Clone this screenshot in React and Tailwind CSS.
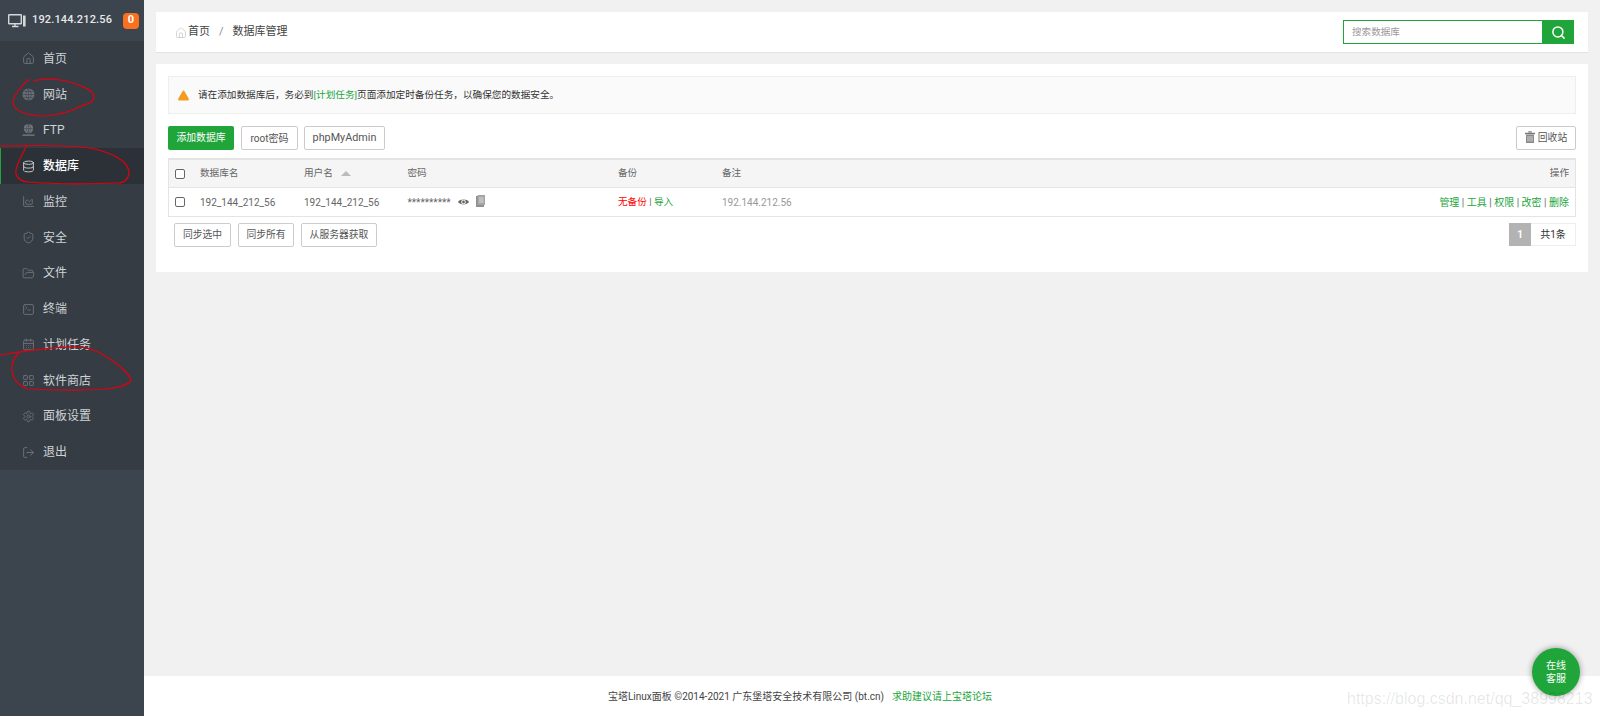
import React from "react";
import {
  House,
  Database,
  ChartArea,
  ShieldCheck,
  FolderOpen,
  SquareTerminal,
  CalendarDays,
  LayoutGrid,
  Settings,
  LogOut,
  Search,
  TriangleAlert,
} from "lucide-react";

const GlobeFill = (props) => (
  <svg width="13" height="13" viewBox="0 0 13 13" fill="none" {...props}>
    <circle cx="6.5" cy="6.5" r="6" fill="#6b7177" />
    <path d="M0.5 6.5h12M1.5 3.5h10M1.5 9.5h10M6.5 0.5v12M6.5 0.5C3 4 3 9 6.5 12.5M6.5 0.5C10 4 10 9 6.5 12.5" stroke="#3b4249" strokeWidth="0.6" />
  </svg>
);

const FtpIcon = (props) => (
  <svg width="14" height="14" viewBox="0 0 14 14" fill="none" {...props}>
    <circle cx="7" cy="5.5" r="5" fill="#73797f" />
    <path d="M2 5.5h10M7 0.5v10M7 0.5C4 3 4 8 7 10.5M7 0.5C10 3 10 8 7 10.5" stroke="#3b4249" strokeWidth="0.6" />
    <path d="M0.5 12.5h13" stroke="#73797f" strokeWidth="1.5" />
  </svg>
);

const menu = [
  { name: "首页", icon: House },
  { name: "网站", icon: GlobeFill, custom: true },
  { name: "FTP", icon: FtpIcon, custom: true },
  { name: "数据库", icon: Database, active: true },
  { name: "监控", icon: ChartArea },
  { name: "安全", icon: ShieldCheck },
  { name: "文件", icon: FolderOpen },
  { name: "终端", icon: SquareTerminal },
  { name: "计划任务", icon: CalendarDays },
  { name: "软件商店", icon: LayoutGrid },
  { name: "面板设置", icon: Settings },
  { name: "退出", icon: LogOut },
];

const Btn = ({ children, className = "" }) => (
  <button className={"h-6 flex items-center justify-center bg-white border border-[#cccccc] rounded-[2px] text-[#555555] " + className}>
    {children}
  </button>
);

const Check = () => (
  <span className="block w-[10px] h-[10px] border border-[#666666] rounded-[2px] bg-white shrink-0" />
);

const Sidebar = () => (
  <aside className="w-[144px] shrink-0 h-[716px] bg-[#3c444d]">
    <div className="h-[41px] flex items-center pl-2 pr-[5px] text-white">
      <svg width="18" height="14" viewBox="0 0 18 14" fill="none" className="shrink-0">
        <rect x="0.7" y="0.7" width="12.6" height="9" rx="0.5" stroke="#d5d8da" strokeWidth="1.4" />
        <path d="M4 12.5h6.5M7 10v2.5" stroke="#d5d8da" strokeWidth="1.4" />
        <rect x="15" y="1.5" width="2.6" height="11" fill="#d5d8da" />
      </svg>
      <span className="ml-[6px] text-[11px] font-medium text-[#e6e8ea] tracking-[0.15px]">192.144.212.56</span>
      <span className="ml-auto w-4 h-4 rounded-[4px] bg-[#f9711f] text-white text-[11px] font-bold flex items-center justify-center">0</span>
    </div>
    <nav className="h-[429px] bg-[#353c44]">
      {menu.map((item) => {
        const Icon = item.icon;
        return (
          <div
            key={item.name}
            className={
              "h-[35.75px] flex items-center text-[12px] " +
              (item.active
                ? "bg-[#2c3138] text-white font-medium border-l border-[#20a53a] pl-[21px]"
                : "text-[#cfd3d6] pl-[22px]")
            }
          >
            <span className="w-[13px] flex justify-center">
              {item.custom ? (
                <Icon />
              ) : (
                <Icon size={13} strokeWidth={1.8} className={item.active ? "text-[#c4c8cb]" : "text-[#6b7177]"} />
              )}
            </span>
            <span className="ml-[8px]">{item.name}</span>
          </div>
        );
      })}
    </nav>
  </aside>
);

const TopBar = () => (
  <div className="h-10 bg-white shadow-[0_1px_1px_rgba(0,0,0,0.05)] flex items-center justify-between pl-[19px] pr-[14px]">
    <div className="flex items-center pt-[1px] text-[11px] text-[#444444]">
      <House size={12} strokeWidth={1.2} className="text-[#bbbbbb] mr-[1px]" />
      <span>首页</span>
      <span className="mx-[9px] text-[#888888]">/</span>
      <span>数据库管理</span>
    </div>
    <div className="flex h-6 w-[231px]">
      <div className="flex-1 border border-[#20a53a] border-r-0 bg-white pl-2 flex items-center text-[9.6px] text-[#999999]">
        搜索数据库
      </div>
      <div className="w-8 bg-[#20a53a] flex items-center justify-center">
        <Search size={15} strokeWidth={2.4} className="text-white" />
      </div>
    </div>
  </div>
);

const Alert = () => (
  <div className="h-[38px] bg-[#fafafa] border border-[#eeeeee] flex items-center pl-2 text-[9.65px] text-[#333333]">
    <TriangleAlert size={13} strokeWidth={0} fill="#f39c1f" className="shrink-0" />
    <span className="ml-[8px]">
      请在添加数据库后，务必到<span className="text-[#20a53a]">[计划任务]</span>页面添加定时备份任务，以确保您的数据安全。
    </span>
  </div>
);

const Toolbar = () => (
  <div className="mt-[12px] flex items-center">
    <button className="h-6 w-[66px] bg-[#20a53a] rounded-[2px] text-[9.8px] text-white flex items-center justify-center">添加数据库</button>
    <Btn className="ml-[7px] w-[57px] text-[10px]">root密码</Btn>
    <Btn className="ml-[6px] w-[81px] text-[10.8px]">phpMyAdmin</Btn>
    <Btn className="ml-auto w-[60px] text-[9.8px]">
      <svg width="10" height="12" viewBox="0 0 10 12" className="mr-[3px] -mt-[3px]">
        <path d="M3.5 1.5V0.5h3v1M0 2h10v1H0z" fill="#777777" stroke="#777777" strokeWidth="0.4" />
        <path d="M1 3.5h8V12H1z" fill="#8a8a8a" />
        <path d="M3 5v5.5M5 5v5.5M7 5v5.5" stroke="#f0f0f0" strokeWidth="0.7" />
      </svg>
      回收站
    </Btn>
  </div>
);

const Table = () => (
  <div className="mt-2 border border-[#e4e4e4] border-t-2 text-[9.6px] text-[#666666]">
    <div className="h-[28px] bg-[#f5f5f5] border-b border-[#e4e4e4] flex items-center pl-[6px] pr-[6px]">
      <Check />
      <span className="ml-[15px] w-[104px]">数据库名</span>
      <span className="w-[103.5px] flex items-center">
        用户名
        <span className="ml-2 border-x-[5px] border-x-transparent border-b-[5px] border-b-[#bbbbbb]" />
      </span>
      <span className="w-[210.5px]">密码</span>
      <span className="w-[104px]">备份</span>
      <span>备注</span>
      <span className="ml-auto">操作</span>
    </div>
    <div className="h-[28px] flex items-center pl-[6px] pr-[6px]">
      <Check />
      <span className="ml-[15px] w-[104px] text-[10px]">192_144_212_56</span>
      <span className="w-[103.5px] text-[10px]">192_144_212_56</span>
      <span className="w-[210.5px] flex items-center text-[10px]">
        **********
        <svg width="11" height="8" viewBox="0 0 11 8" className="ml-[7px]">
          <path d="M0 4C2 0.8 9 0.8 11 4C9 7.2 2 7.2 0 4z" fill="#666666" />
          <circle cx="5.5" cy="4" r="2.3" fill="#ffffff" />
          <circle cx="5.5" cy="4" r="1.4" fill="#666666" />
        </svg>
        <svg width="9" height="12" viewBox="0 0 9 12" className="ml-[7px] -mt-[2px]">
          <rect x="0" y="1" width="8" height="11" fill="#8f8f8f" />
          <rect x="1.5" y="0" width="7.5" height="10" fill="#a5a5a5" />
          <path d="M3 3h4.5M3 5h4.5M3 7h4.5" stroke="#e8e8e8" strokeWidth="0.8" />
        </svg>
      </span>
      <span className="w-[104px]">
        <span className="text-[#ff0000]">无备份</span> | <span className="text-[#20a53a]">导入</span>
      </span>
      <span className="text-[10px] text-[#999999]">192.144.212.56</span>
      <span className="ml-auto text-[10px]">
        <span className="text-[#20a53a]">管理</span> | <span className="text-[#20a53a]">工具</span> |{" "}
        <span className="text-[#20a53a]">权限</span> | <span className="text-[#20a53a]">改密</span> |{" "}
        <span className="text-[#20a53a]">删除</span>
      </span>
    </div>
  </div>
);

const BottomBar = () => (
  <div className="mt-[6px] flex items-start">
    <Btn className="ml-[6px] w-[57px] text-[9.8px]">同步选中</Btn>
    <Btn className="ml-[7px] w-[56px] text-[9.8px]">同步所有</Btn>
    <Btn className="ml-[7px] w-[76px] text-[9.8px]">从服务器获取</Btn>
    <div className="ml-auto h-[23px] flex text-[10px]">
      <span className="w-[22px] bg-[#b3b3b3] text-white font-bold flex items-center justify-center">1</span>
      <span className="w-[45px] border border-[#eeeeee] border-l-0 text-[#333333] flex items-center justify-center">共1条</span>
    </div>
  </div>
);

// hand drawn marks on top of the screenshot
const Scribbles = () => (
  <svg width="144" height="420" viewBox="0 0 144 420" fill="none" stroke="#e0000f" strokeWidth="1.2" className="absolute left-0 top-0 pointer-events-none">
    <path d="M30 79C22 84 13 96 13 103C14 111 28 116 44 116C55 115 68 113 77 108C84 104 94 104 94 96C94 90 78 84 66 81C54 78 40 79 33 81" />
    <path d="M0 146C40 145 70 145 90 148C110 152 128 160 129 172C129 178 125 183 118 183C90 184 50 184 28 182C18 181 15 175 16 170C18 160 24 152 27 145" />
    <path d="M0 355C30 350 60 346 80 347C95 348 105 356 117 364C124 370 131 376 131 381C126 386 118 388 105 389C80 391 50 390 28 389C18 386 11 378 12 366C13 359 16 355 20 352" />
  </svg>
);

export default function App() {
  return (
    <div className="relative w-[1600px] h-[716px] overflow-hidden flex bg-[#f1f1f1] font-['Roboto','Noto_Sans_CJK_SC',sans-serif]">
      <Sidebar />
      <main className="flex-1 flex flex-col min-w-0">
        <div className="flex-1 pt-[12px] pl-[12px] pr-[12px]">
          <TopBar />
          <section className="mt-[12px] h-[208px] bg-white pt-[12px] px-[12px]">
            <Alert />
            <Toolbar />
            <Table />
            <BottomBar />
          </section>
        </div>
        <footer className="h-[40px] bg-white flex items-center justify-center pr-[144px] text-[10px] text-[#444444]">
          <span>宝塔Linux面板 ©2014-2021 广东堡塔安全技术有限公司 (bt.cn)</span>
          <span className="ml-[8px] text-[#20a53a]">求助建议请上宝塔论坛</span>
        </footer>
      </main>
      <Scribbles />
      <div className="absolute left-[1532px] top-[648px] w-12 h-12 rounded-full bg-[#20a53a] shadow-[0_0_6px_rgba(0,0,0,0.4)] text-white text-[10px] leading-[13px] flex items-center justify-center text-center">
        在线<br />客服
      </div>
      <div className="absolute left-[1347px] top-[687px] text-[16px] text-[#000000]/10 font-['Liberation_Sans',sans-serif] pointer-events-none">
        https://blog.csdn.net/qq_38998213
      </div>
    </div>
  );
}
